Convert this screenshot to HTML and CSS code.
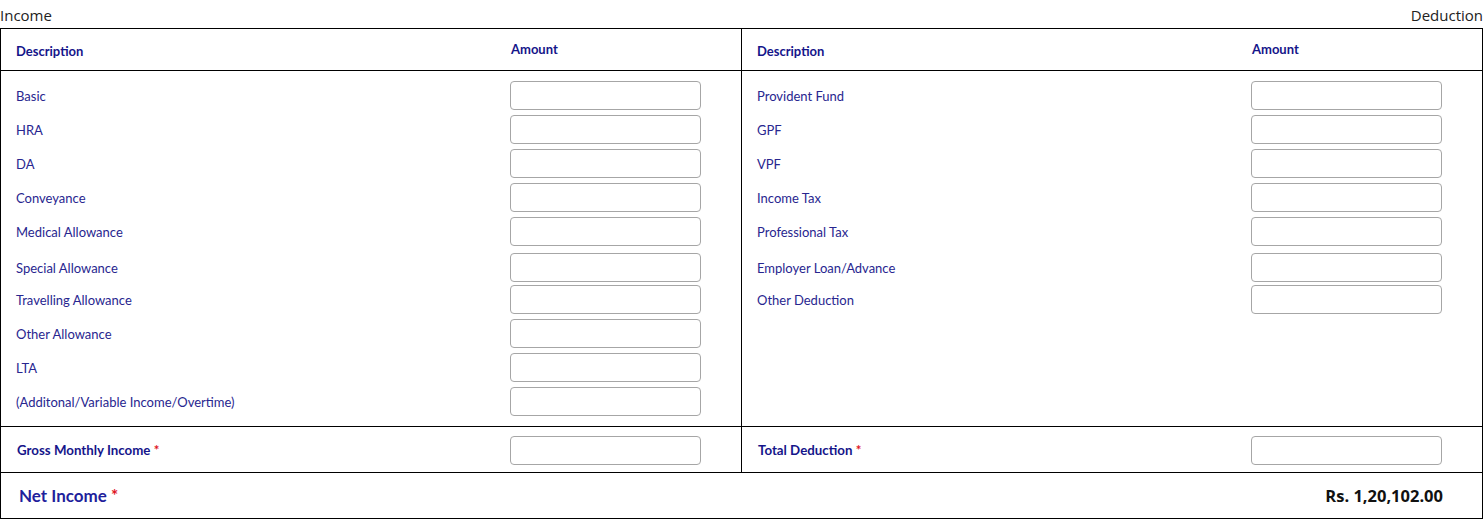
FILE: index.html
```html
<!DOCTYPE html>
<html lang="en">
<head>
<meta charset="utf-8">
<title>Income and Deduction</title>
<link rel="stylesheet" href="styles.css">
</head>
<body>
<div class="titles">
  <span class="title">Income</span>
  <span class="title">Deduction</span>
</div>
<div class="sheet">
  <div class="halves">
    <section class="half half-left">
      <div class="head">
        <span class="head-desc">Description</span>
        <span class="head-amt">Amount</span>
      </div>
      <div class="body">
        <div class="row"><span class="lbl">Basic</span><input class="amt" type="text"></div>
        <div class="row"><span class="lbl">HRA</span><input class="amt" type="text"></div>
        <div class="row"><span class="lbl">DA</span><input class="amt" type="text"></div>
        <div class="row"><span class="lbl">Conveyance</span><input class="amt" type="text"></div>
        <div class="row"><span class="lbl">Medical Allowance</span><input class="amt" type="text"></div>
        <div class="row row-shift"><span class="lbl">Special Allowance</span><input class="amt" type="text"></div>
        <div class="row"><span class="lbl">Travelling Allowance</span><input class="amt" type="text"></div>
        <div class="row"><span class="lbl">Other Allowance</span><input class="amt" type="text"></div>
        <div class="row"><span class="lbl">LTA</span><input class="amt" type="text"></div>
        <div class="row"><span class="lbl">(Additonal/Variable Income/Overtime)</span><input class="amt" type="text"></div>
      </div>
      <div class="total">
        <span class="total-lbl">Gross Monthly Income <span class="req">*</span></span>
        <input class="amt" type="text">
      </div>
    </section>
    <section class="half">
      <div class="head">
        <span class="head-desc">Description</span>
        <span class="head-amt">Amount</span>
      </div>
      <div class="body">
        <div class="row"><span class="lbl">Provident Fund</span><input class="amt" type="text"></div>
        <div class="row"><span class="lbl">GPF</span><input class="amt" type="text"></div>
        <div class="row"><span class="lbl">VPF</span><input class="amt" type="text"></div>
        <div class="row"><span class="lbl">Income Tax</span><input class="amt" type="text"></div>
        <div class="row"><span class="lbl">Professional Tax</span><input class="amt" type="text"></div>
        <div class="row row-shift"><span class="lbl">Employer Loan/Advance</span><input class="amt" type="text"></div>
        <div class="row"><span class="lbl">Other Deduction</span><input class="amt" type="text"></div>
      </div>
      <div class="total">
        <span class="total-lbl">Total Deduction <span class="req">*</span></span>
        <input class="amt" type="text">
      </div>
    </section>
  </div>
  <div class="net">
    <span class="net-lbl">Net Income <span class="req">*</span></span>
    <span class="net-val">Rs. 1,20,102.00</span>
  </div>
</div>
</body>
</html>
```
FILE: styles.css
```css
* { box-sizing: border-box; }
html, body { margin: 0; padding: 0; background: #fff; }
body {
  font-family: Lato, "Open Sans", sans-serif;
  color: #222;
  width: 1483px;
}
.titles {
  height: 28px;
  display: flex;
  justify-content: space-between;
  align-items: center;
  padding-top: 2px;
}
.title {
  font-family: "Open Sans", sans-serif;
  font-size: 15px;
  color: #222;
}
.sheet {
  border: 1px solid #000;
  width: 1483px;
}
.halves {
  display: grid;
  grid-template-columns: 741px 1fr;
}
.half {
  display: flex;
  flex-direction: column;
}
.half-left { border-right: 1px solid #000; }
.head {
  height: 42px;
  border-bottom: 1px solid #000;
  display: grid;
  grid-template-columns: 494px 1fr;
  padding-left: 15px;
  align-items: center;
  color: #15158a;
  font-weight: 700;
  font-size: 13px;
}
.head-desc { padding-top: 3px; }
.head-amt { padding-left: 1px; padding-bottom: 2px; }
.body {
  flex: 1;
  padding: 10px 0 10px 15px;
  display: flex;
  flex-direction: column;
  gap: 5px;
}
.row {
  display: grid;
  grid-template-columns: 494px 191px;
  align-items: center;
  height: 29px;
}
.row-shift { margin-top: 2px; margin-bottom: -2px; }
.lbl {
  font-size: 13px;
  color: #28268f;
}
.amt {
  width: 191px;
  height: 29px;
  border: 1px solid #a6a6a6;
  border-radius: 4px;
  background: #fff;
  margin: 0;
  padding: 0 8px;
  font: inherit;
}
.total {
  height: 46px;
  border-top: 1px solid #000;
  display: grid;
  grid-template-columns: 494px 191px;
  align-items: center;
  padding-left: 16px;
  padding-top: 1px;
}
.total .amt { margin-left: -1px; }
.total-lbl {
  font-size: 13.3px;
  font-weight: 700;
  color: #15158a;
}
.req { color: #e0141e; }
.net {
  height: 46px;
  border-top: 1px solid #000;
  display: flex;
  justify-content: space-between;
  align-items: center;
  padding: 0 39px 0 18px;
}
.net-lbl {
  font-size: 17px;
  font-weight: 700;
  color: #1f1f9c;
}
.net-val {
  font-family: "Open Sans", sans-serif;
  font-size: 16.5px;
  font-weight: 700;
  color: #111;
}
```
